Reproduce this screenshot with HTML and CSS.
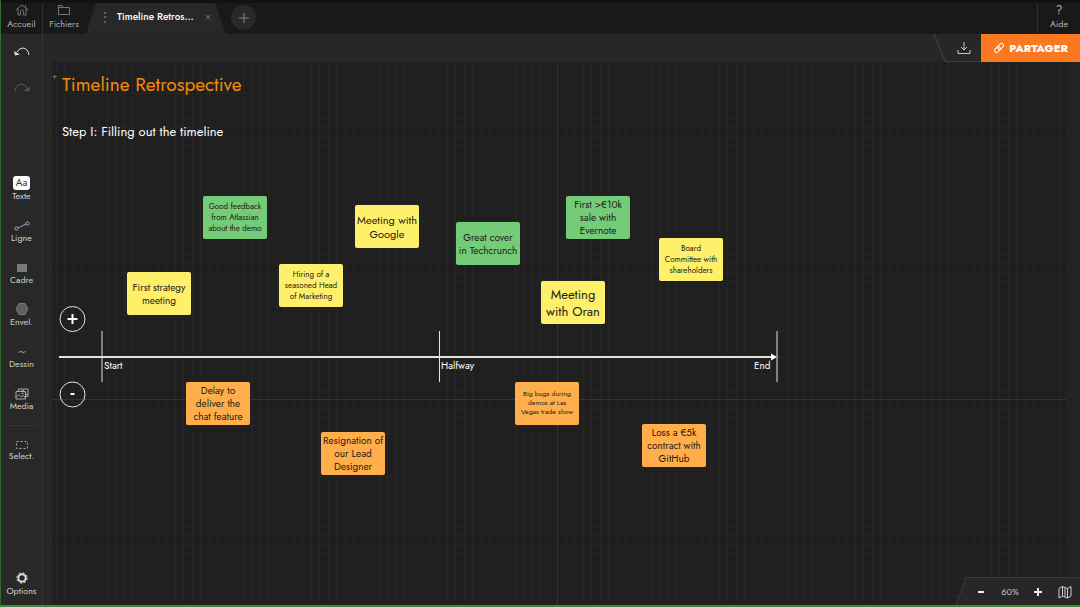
FILE: index.html
```html
<!DOCTYPE html>
<html lang="fr">
<head>
<meta charset="utf-8">
<meta name="viewport" content="width=device-width, initial-scale=1">
<title>Timeline Retrospective</title>
<link rel="stylesheet" href="styles.css">
</head>
<body>
<div class="app">
  <header class="topbar">
    <button class="nav-btn nav-home">
      <svg width="14" height="12" viewBox="0 0 14 12"><path d="M1 6 L7 1 L13 6 M3 5V11H5.5V7.5Q5.500 6 7 6T8.500 7.500V11H11V5 M10.500 3.500V1.500"/></svg>
      <span>Accueil</span>
    </button>
    <button class="nav-btn">
      <svg width="14" height="12" viewBox="0 0 14 12"><path d="M1.500 10.500V1.500H5L6.500 3.500H12.500V10.500Z M1.500 3.500H6.500"/></svg>
      <span>Fichiers</span>
    </button>
    <div class="tab">
      <span class="tab-grip">⋮</span>
      <span class="tab-name">Timeline Retros…</span>
      <button class="tab-close" aria-label="Fermer">×</button>
    </div>
    <button class="tab-add" aria-label="Nouvel onglet">
      <svg width="12" height="12" viewBox="0 0 12 12"><path d="M6 1V11M1 6H11"/></svg>
    </button>
    <button class="nav-btn nav-help">
      <span class="help-mark">?</span>
      <span>Aide</span>
    </button>
  </header>

  <nav class="sidebar">
    <button class="history" aria-label="Annuler">
      <svg width="18" height="12" viewBox="0 0 18 12"><path d="M4 6Q6 2 10 2Q15 2.500 16 9"/><path class="solid" d="M1 5L7 8.500L2 9.500Z"/></svg>
    </button>
    <button class="history history-off" aria-label="Rétablir">
      <svg width="18" height="12" viewBox="0 0 18 12"><path d="M14 6Q12 2 8 2Q3 2.500 2 9"/><path class="solid" d="M17 5L11 8.500L16 9.500Z"/></svg>
    </button>
    <div class="tools">
      <button class="tool"><span class="text-chip">Aa</span><span>Texte</span></button>
      <button class="tool">
        <svg width="16" height="12" viewBox="0 0 16 12"><path d="M4 8L12 4"/><circle cx="2.500" cy="8.500" r="1.600"/><circle cx="13.500" cy="3.500" r="1.600"/></svg>
        <span>Ligne</span></button>
      <button class="tool">
        <svg width="16" height="12" viewBox="0 0 16 12"><rect class="shape" x="3" y="2" width="10" height="8"/></svg>
        <span>Cadre</span></button>
      <button class="tool">
        <svg width="16" height="14" viewBox="0 0 16 14"><path class="shape shape-edge" d="M5 1.500H11L14 7L11 12.500H5L2 7Z"/></svg>
        <span>Envel.</span></button>
      <button class="tool">
        <svg width="16" height="12" viewBox="0 0 16 12"><path d="M4.500 7Q6 4 8 6T11.500 5"/></svg>
        <span>Dessin</span></button>
      <button class="tool">
        <svg width="16" height="12" viewBox="0 0 16 12"><path d="M2 3.500H11.500V11H2ZM4.500 3.500V1H14V8.500H11.500M2 9.500L5 6.500L7.500 9L9 7.500L11.500 9.500M7 3.500L9 2L11 4.500M11.500 6.500H14"/><circle cx="8.500" cy="5.500" r=".6"/></svg>
        <span>Media</span></button>
    </div>
    <button class="tool tool-select">
      <svg width="16" height="12" viewBox="0 0 16 12"><rect x="2.500" y="3.500" width="11" height="7" stroke-dasharray="2 2"/></svg>
      <span>Select.</span></button>
    <button class="tool tool-options">
      <svg width="16" height="14" viewBox="0 0 16 14"><circle class="cog" cx="8" cy="7" r="3.700"/><circle class="teeth" cx="8" cy="7" r="5.200"/></svg>
      <span>Options</span></button>
  </nav>

  <main class="board">
    <div class="ruler">
      <div class="actions">
        <svg class="slant" width="14" height="28" viewBox="0 0 14 28"><path d="M1 0L12.500 27.500H14"/></svg>
        <button class="download" aria-label="Télécharger">
          <svg width="14" height="14" viewBox="0 0 14 14"><path d="M7 1V9M4 6L7 9L10 6M1 9V12.500H13V9"/></svg>
        </button>
        <button class="share">
          <svg width="12" height="12" viewBox="0 0 12 12"><g transform="rotate(-45 6 6)"><rect x="0.500" y="4" width="6.500" height="4" rx="2"/><rect x="5" y="4" width="6.500" height="4" rx="2"/></g></svg>
          PARTAGER
        </button>
      </div>
    </div>
    <div class="canvas">
      <svg class="guides" width="100%" height="100%">
        <defs>
          <pattern id="grid" width="17" height="17" patternUnits="userSpaceOnUse">
            <path d="M4.500 0V17M12.500 0V17M0 6.500H17M0 14.500H17"/>
          </pattern>
        </defs>
        <rect class="grid-fill" width="100%" height="100%" fill="url(#grid)"/>
        <path class="major" d="M505.500 0V2000M0 337.500H3000"/>
        <g class="axis">
          <path class="axis-line" d="M7 295H722"/>
          <path class="arrow" d="M719 291.500L725 295L719 298.500Z"/>
          <path d="M50 269V320M387.500 269V320M725 269V320"/>
          <circle cx="20.500" cy="257" r="12.500"/>
          <circle cx="20.500" cy="332.500" r="12.500"/>
          <path class="sign" d="M15.500 257H25.500M20.500 252V262M18.500 332H22.500"/>
        </g>
      </svg>
      <span class="origin">+</span>
      <h1 class="title">Timeline Retrospective</h1>
      <h2 class="step">Step I: Filling out the timeline</h2>
      <span class="mark start">Start</span>
      <span class="mark halfway">Halfway</span>
      <span class="mark end">End</span>

      <div class="note green small n-feedback">Good feedback<br>from Atlassian<br>about the demo</div>
      <div class="note yellow large n-google">Meeting with<br>Google</div>
      <div class="note green medium n-cover">Great cover<br>in Techcrunch</div>
      <div class="note green medium n-sale">First &gt;€10k<br>sale with<br>Evernote</div>
      <div class="note yellow small n-board">Board<br>Committee with<br>shareholders</div>
      <div class="note yellow huge n-oran">Meeting<br>with Oran</div>
      <div class="note yellow small n-hiring">Hiring of a<br>seasoned Head<br>of Marketing</div>
      <div class="note yellow medium n-strategy">First strategy<br>meeting</div>
      <div class="note orange medium n-delay">Delay to<br>deliver the<br>chat feature</div>
      <div class="note orange medium n-resign">Resignation of<br>our Lead<br>Designer</div>
      <div class="note orange tiny n-bugs">Big bugs during<br>demos at Las<br>Vegas trade show</div>
      <div class="note orange medium n-loss">Loss a €5k<br>contract with<br>GitHub</div>
    </div>
    <div class="zoom">
      <svg class="zoom-edge" width="12" height="28" viewBox="0 0 12 28"><path class="zoom-fill" d="M0 28L10 0H12V28Z"/><path d="M0 28L10 .5H12"/></svg>
      <div class="zoom-body">
        <button aria-label="Zoom arrière"><svg width="8" height="8" viewBox="0 0 8 8"><path class="bold" d="M1 4H7"/></svg></button>
        <span class="zoom-value">60%</span>
        <button aria-label="Zoom avant"><svg width="10" height="10" viewBox="0 0 10 10"><path class="bold" d="M1 5H9M5 1V9"/></svg></button>
        <button aria-label="Carte"><svg width="14" height="14" viewBox="0 0 14 14"><path d="M1 3.500L4.500 1.500L9.500 3.500L13 1.500V11L9.500 13L4.500 11L1 13ZM4.500 1.500V11M7 2.500V12M9.500 3.500V13"/></svg></button>
      </div>
    </div>
  </main>
</div>
</body>
</html>
```
FILE: styles.css
```css
* { box-sizing: border-box; }
body {
  margin: 0;
  background: #1f1f1f;
  color: #fff;
  font-family: Futura, Jost, Lato, sans-serif;
}
button {
  padding: 0;
  border: 0;
  background: none;
  color: inherit;
  font: inherit;
  cursor: pointer;
}
svg { display: block; fill: none; stroke: currentColor; }

.app {
  display: grid;
  grid-template: 34px 1fr / 42px 1fr;
  height: 100vh;
  min-height: 560px;
  border-left: 1px solid #2f6b2f;
  border-bottom: 2px solid #3f8a3f;
}

.topbar {
  grid-column: 1 / -1;
  display: flex;
  background: #191919;
  border-top: 3px solid #101210;
}
.nav-btn {
  display: flex;
  flex-direction: column;
  align-items: center;
  gap: 1px;
  width: 42px;
  padding-top: 1px;
  color: #b4b4b4;
  font-size: 9px;
  line-height: 12px;
}
.nav-btn svg { color: #777; margin-bottom: 1px; }
.nav-home { border-right: 1px solid #303030; }
.nav-help {
  width: 43px;
  margin-left: auto;
  border-left: 1px solid #303030;
}
.help-mark { font-size: 12px; line-height: 13px; }
.tab {
  display: flex;
  align-items: center;
  width: 140px;
  margin-left: 1px;
  padding: 0 12px 4px 12px;
  background: #282828;
  clip-path: polygon(0 100%, 10px 0, 129px 0, 100% 100%);
}
.tab-grip { width: 19px; color: #777; font-size: 14px; line-height: 16px; }
.tab-name { flex: 1; font-size: 10px; font-weight: 500; white-space: nowrap; }
.tab-close { width: 12px; color: #777; font-size: 10px; }
.tab-add {
  display: grid;
  place-items: center;
  width: 25px;
  height: 25px;
  margin: 2px 0 0 5px;
  border-radius: 50%;
  background: #292929;
  color: #888;
}

.sidebar {
  display: flex;
  flex-direction: column;
  background: #282828;
  border-right: 1px solid #343434;
  padding-bottom: 8px;
}
.history {
  display: grid;
  place-items: center;
  height: 36px;
  color: #ddd;
}
.history-off { color: #5c5c5c; }
.solid { fill: currentColor; stroke: none; }
.tools { display: grid; margin-top: 54px; }
.tool {
  display: flex;
  flex-direction: column;
  align-items: center;
  justify-content: flex-end;
  height: 42px;
  color: #d0d0d0;
  font-size: 9px;
  line-height: 12px;
}
.tool svg { color: #a8a8a8; }
.text-chip {
  width: 17px;
  height: 14px;
  border-radius: 3px;
  background: #fff;
  color: #333;
  font-size: 10px;
  line-height: 14px;
}
.shape { fill: #7a7a7a; stroke: none; }
.shape-edge { fill: #5e5e5e; stroke: #7a7a7a; }
.tool-select {
  height: 37px;
  margin: 13px 5px 0;
  border-top: 1px solid #363636;
}
.tool-options { margin-top: auto; }
.tool .cog, .tool .teeth { stroke: #ddd; }
.cog { stroke-width: 2; }
.teeth { stroke-width: 1; stroke-dasharray: 2 2.080; }

.board {
  position: relative;
  display: grid;
  grid-template-rows: 28px 1fr;
  padding-left: 9px;
  min-width: 0;
  background: #272727;
  overflow: hidden;
}
.ruler { display: flex; justify-content: flex-end; }
.actions { display: flex; color: #c8c8c8; }
.slant { color: #454545; }
.download {
  display: grid;
  place-items: center;
  width: 34px;
  border-bottom: 1px solid #3c3c3c;
}
.share {
  display: flex;
  align-items: center;
  justify-content: center;
  gap: 4px;
  width: 99px;
  background: #f97820;
  color: #fff;
  font-size: 11px;
  font-weight: 800;
}
.canvas {
  position: relative;
  background: #1f1f1f;
  border-right: 14px solid #232323;
  overflow: hidden;
}
.guides { position: absolute; inset: 0; }
.guides pattern path { stroke: #252525; }
.grid-fill { stroke: none; }
.major { stroke: #343434; }
.axis { stroke: #e2e2e2; stroke-width: 1; }
.axis-line { stroke-width: 2; }
.arrow { fill: #fff; stroke: none; }
.sign { stroke: #fff; stroke-width: 2; }

.title, .step, .mark, .origin { position: absolute; margin: 0; white-space: nowrap; }
.title { left: 10px; top: 11px; color: #f28a10; font-size: 19px; line-height: 24px; font-weight: 400; }
.step { left: 10px; top: 61px; font-size: 13px; line-height: 18px; font-weight: 400; }
.origin { left: 0; top: 10px; color: #999; font-size: 8px; line-height: 8px; }
.mark { top: 297px; font-size: 10px; line-height: 14px; }
.start { left: 52px; }
.halfway { left: 389px; }
.end { left: 702px; }

.note {
  position: absolute;
  display: flex;
  flex-direction: column;
  justify-content: center;
  width: 64px;
  height: 43px;
  border-radius: 2px;
  color: #252015;
  text-align: center;
  white-space: nowrap;
}
.tiny { font-size: 7px; line-height: 9px; }
.small { font-size: 8px; line-height: 11px; }
.medium { font-size: 10px; line-height: 13px; }
.large { font-size: 11px; line-height: 14px; }
.huge { font-size: 13px; line-height: 17px; }
.green { background: #74cb78; }
.yellow { background: #fff06c; }
.orange { background: #ffae4b; }
.n-feedback { left: 151px; top: 134px; }
.n-google { left: 303px; top: 143px; }
.n-cover { left: 404px; top: 160px; }
.n-sale { left: 514px; top: 134px; }
.n-board { left: 607px; top: 176px; }
.n-oran { left: 489px; top: 219px; }
.n-hiring { left: 227px; top: 202px; }
.n-strategy { left: 75px; top: 210px; }
.n-delay { left: 134px; top: 320px; }
.n-resign { left: 269px; top: 370px; }
.n-bugs { left: 463px; top: 320px; }
.n-loss { left: 590px; top: 362px; }

.zoom {
  position: absolute;
  right: 0;
  bottom: 0;
  display: flex;
  color: #ccc;
}
.zoom-edge { color: #3c3c3c; }
.zoom-fill { fill: #272727; stroke: none; }
.zoom-body {
  display: grid;
  grid-template-columns: 26px 32px 24px 30px;
  align-items: center;
  justify-items: center;
  height: 28px;
  background: #272727;
  border-top: 1px solid #3c3c3c;
}
.zoom-value { font-size: 9px; }
.bold { stroke: #eee; stroke-width: 2; }
```
